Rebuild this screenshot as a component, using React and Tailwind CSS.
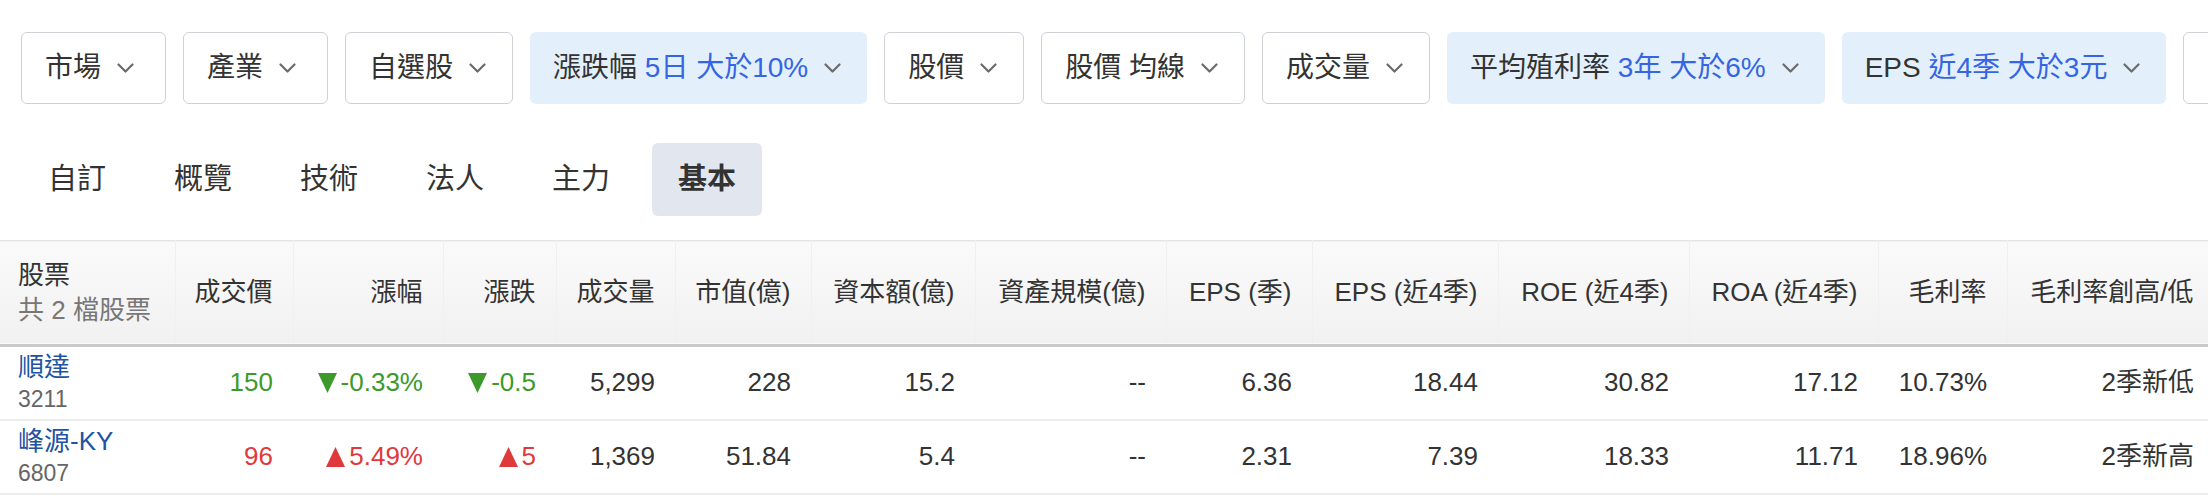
const FONT = { fontFamily: '"Liberation Sans", "Noto Sans CJK TC", sans-serif' };

const Chevron = () => (
  <svg className="w-[17px] h-[10px] shrink-0" viewBox="0 0 17 10" fill="none">
    <path d="M1.5 1.5 L8.5 8.5 L15.5 1.5" stroke="#6b6b6b" strokeWidth="2.2" strokeLinecap="round" strokeLinejoin="round" />
  </svg>
);

const Tri = ({ up }) => (
  <svg className="inline-block w-[19px] h-[20px] mr-[4px] align-[-2px]" viewBox="0 0 19 20">
    {up ? <polygon points="9.5,0 19,20 0,20" fill="currentColor" /> : <polygon points="0,0 19,0 9.5,20" fill="currentColor" />}
  </svg>
);

const FilterButton = ({ label, value, active, className = '' }) => (
  <div
    className={`h-[72px] shrink-0 flex items-center gap-[16px] pl-[23px] pr-[26px] rounded-md text-[28px] text-[#333] whitespace-nowrap ${
      active ? 'bg-[#e3f0fc]' : 'bg-white border border-[#cdd1d6]'
    } ${className}`}
  >
    <span>
      {label}
      {value && <span className="text-[#3565e2]"> {value}</span>}
    </span>
    <Chevron />
  </div>
);

const filters = [
  { label: '市場', className: 'w-[145px]' },
  { label: '產業', className: 'w-[145px]' },
  { label: '自選股' },
  { label: '漲跌幅', value: '5日 大於10%', active: true },
  { label: '股價' },
  { label: '股價 均線' },
  { label: '成交量' },
  { label: '平均殖利率', value: '3年 大於6%', active: true },
  { label: 'EPS', value: '近4季 大於3元', active: true },
  { label: '營收' },
];

const tabs = ['自訂', '概覽', '技術', '法人', '主力', '基本'];

const columns = [
  { title: '成交價', w: 118 },
  { title: '漲幅', w: 150 },
  { title: '漲跌', w: 113 },
  { title: '成交量', w: 119 },
  { title: '市值(億)', w: 136 },
  { title: '資本額(億)', w: 164 },
  { title: '資產規模(億)', w: 191 },
  { title: 'EPS (季)', w: 146 },
  { title: 'EPS (近4季)', w: 186 },
  { title: 'ROE (近4季)', w: 191 },
  { title: 'ROA (近4季)', w: 189 },
  { title: '毛利率', w: 129 },
  { title: '毛利率創高/低', w: 207 },
];

const rows = [
  {
    name: '順達',
    code: '3211',
    up: false,
    price: '150',
    pct: '-0.33%',
    chg: '-0.5',
    rest: ['5,299', '228', '15.2', '--', '6.36', '18.44', '30.82', '17.12', '10.73%', '2季新低'],
  },
  {
    name: '峰源-KY',
    code: '6807',
    up: true,
    price: '96',
    pct: '5.49%',
    chg: '5',
    rest: ['1,369', '51.84', '5.4', '--', '2.31', '7.39', '18.33', '11.71', '18.96%', '2季新高'],
  },
];

export default function App() {
  return (
    <div className="w-[2208px] h-[502px] overflow-hidden bg-white" style={FONT}>
      {/* Filters */}
      <div className="flex gap-[17px] pl-[21px] pt-[32px]">
        {filters.map((f) => (
          <FilterButton key={f.label} {...f} />
        ))}
      </div>

      {/* Tabs */}
      <div className="flex gap-[16px] pl-[22px] mt-[39px]">
        {tabs.map((t) => (
          <div
            key={t}
            className={`h-[73px] px-[26px] flex items-center text-[29px] text-[#333] rounded-md ${
              t === '基本' ? 'bg-[#e2e7ef] font-semibold' : ''
            }`}
          >
            {t}
          </div>
        ))}
      </div>

      {/* Table */}
      <table className="mt-[24px] table-fixed border-collapse w-[2214px] text-[26px] text-[#333]">
        <colgroup>
          <col className="w-[175px]" />
          {columns.map((c) => (
            <col key={c.title} style={{ width: c.w }} />
          ))}
        </colgroup>
        <thead>
          <tr className="h-[105px] bg-gradient-to-b from-[#fafafa] to-[#f1f1f1] border-t border-[#e4e4e4] border-b-[3px] border-b-[#c9cacb]">
            <th className="text-left font-normal pl-[18px] leading-[35px] border-r border-[#f0f0f0]">
              <div>股票</div>
              <div className="text-[#777]">共 2 檔股票</div>
            </th>
            {columns.map((c) => (
              <th key={c.title} className="text-right font-normal pr-[20px] whitespace-nowrap border-r border-[#f0f0f0]">
                {c.title}
              </th>
            ))}
          </tr>
        </thead>
        <tbody>
          {rows.map((r) => {
            const color = r.up ? 'text-[#e0393b]' : 'text-[#3d9a2a]';
            return (
              <tr key={r.code} className="h-[74px] border-b-2 border-[#ececec]">
                <td className="pl-[18px]">
                  <div className="leading-[32px] text-[#2152a3]">{r.name}</div>
                  <div className="leading-[32px] text-[23px] text-[#666]">{r.code}</div>
                </td>
                <td className={`text-right pr-[20px] ${color}`}>{r.price}</td>
                <td className={`text-right pr-[20px] whitespace-nowrap ${color}`}>
                  <Tri up={r.up} />
                  {r.pct}
                </td>
                <td className={`text-right pr-[20px] whitespace-nowrap ${color}`}>
                  <Tri up={r.up} />
                  {r.chg}
                </td>
                {r.rest.map((v, i) => (
                  <td key={i} className="text-right pr-[20px] whitespace-nowrap">
                    {v}
                  </td>
                ))}
              </tr>
            );
          })}
        </tbody>
      </table>
    </div>
  );
}
